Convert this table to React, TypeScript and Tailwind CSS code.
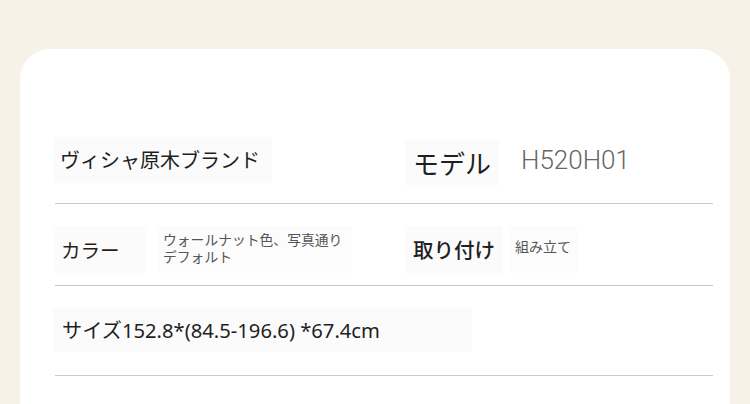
const FONT = { fontFamily: '"Noto Sans CJK JP", "Noto Sans", sans-serif' };
const LATIN = { fontFamily: '"Noto Sans", "Noto Sans CJK JP", sans-serif' };

function Label({ children, className = "" }: { children: React.ReactNode; className?: string }) {
  return (
    <div className={`inline-flex items-center bg-[#fbfbfb] text-[#1f1f1f] ${className}`}>
      {children}
    </div>
  );
}

export default function App() {
  return (
    <div className="h-[404px] overflow-hidden bg-[#f7f2e8] px-5 pt-[49px]" style={FONT}>
      <div className="h-[400px] rounded-[30px] bg-white pl-[35px] pr-[17px] pt-[88px]">
        {/* row 1 */}
        <div className="flex border-b border-[#c9c9c9] pb-[18px]">
          <div className="w-[350px]">
            <Label className="-ml-[2px] h-[46px] w-[219px] px-[7px] text-[20px]">ヴィシャ原木ブランド</Label>
          </div>
          <div className="flex items-center pt-[3px]">
            <Label className="h-[45px] px-2 text-[26px]">モデル</Label>
            <span
              className="ml-[22px] -mt-[4px] text-[26px] font-light text-[#666]"
              style={{ fontFamily: 'Roboto, "Noto Sans", sans-serif' }}
            >
              H520H01
            </span>
          </div>
        </div>

        {/* row 2 */}
        <div className="flex border-b border-[#c9c9c9] pb-[12px] pt-[22px]">
          <div className="flex w-[350px] items-stretch gap-[12px]">
            <Label className="h-[47px] w-[90px] px-[6px] text-[19.5px]">カラー</Label>
            <div className="flex h-[47px] w-[195px] flex-col justify-center bg-[#fcfcfc] px-[6px] pb-[3px] text-[13.8px] leading-[17px] text-[#555]">
              <span>ウォールナット色、写真通り</span>
              <span>デフォルト</span>
            </div>
          </div>
          <div className="flex items-stretch gap-[6px]">
            <Label className="h-[47px] px-2 text-[20.5px] font-medium">取り付け</Label>
            <div className="flex h-[47px] items-center bg-[#fcfcfc] px-[6px] pb-[6px] text-[14px] text-[#555]">組み立て</div>
          </div>
        </div>

        {/* row 3 */}
        <div className="border-b border-[#c9c9c9] pb-[23px] pt-[22px]">
          <Label className="-ml-[2px] h-[44px] w-[419px] px-[9px] text-[20.2px]">
            <span style={LATIN}>サイズ152.8*(84.5-196.6) *67.4cm</span>
          </Label>
        </div>
      </div>
    </div>
  );
}
